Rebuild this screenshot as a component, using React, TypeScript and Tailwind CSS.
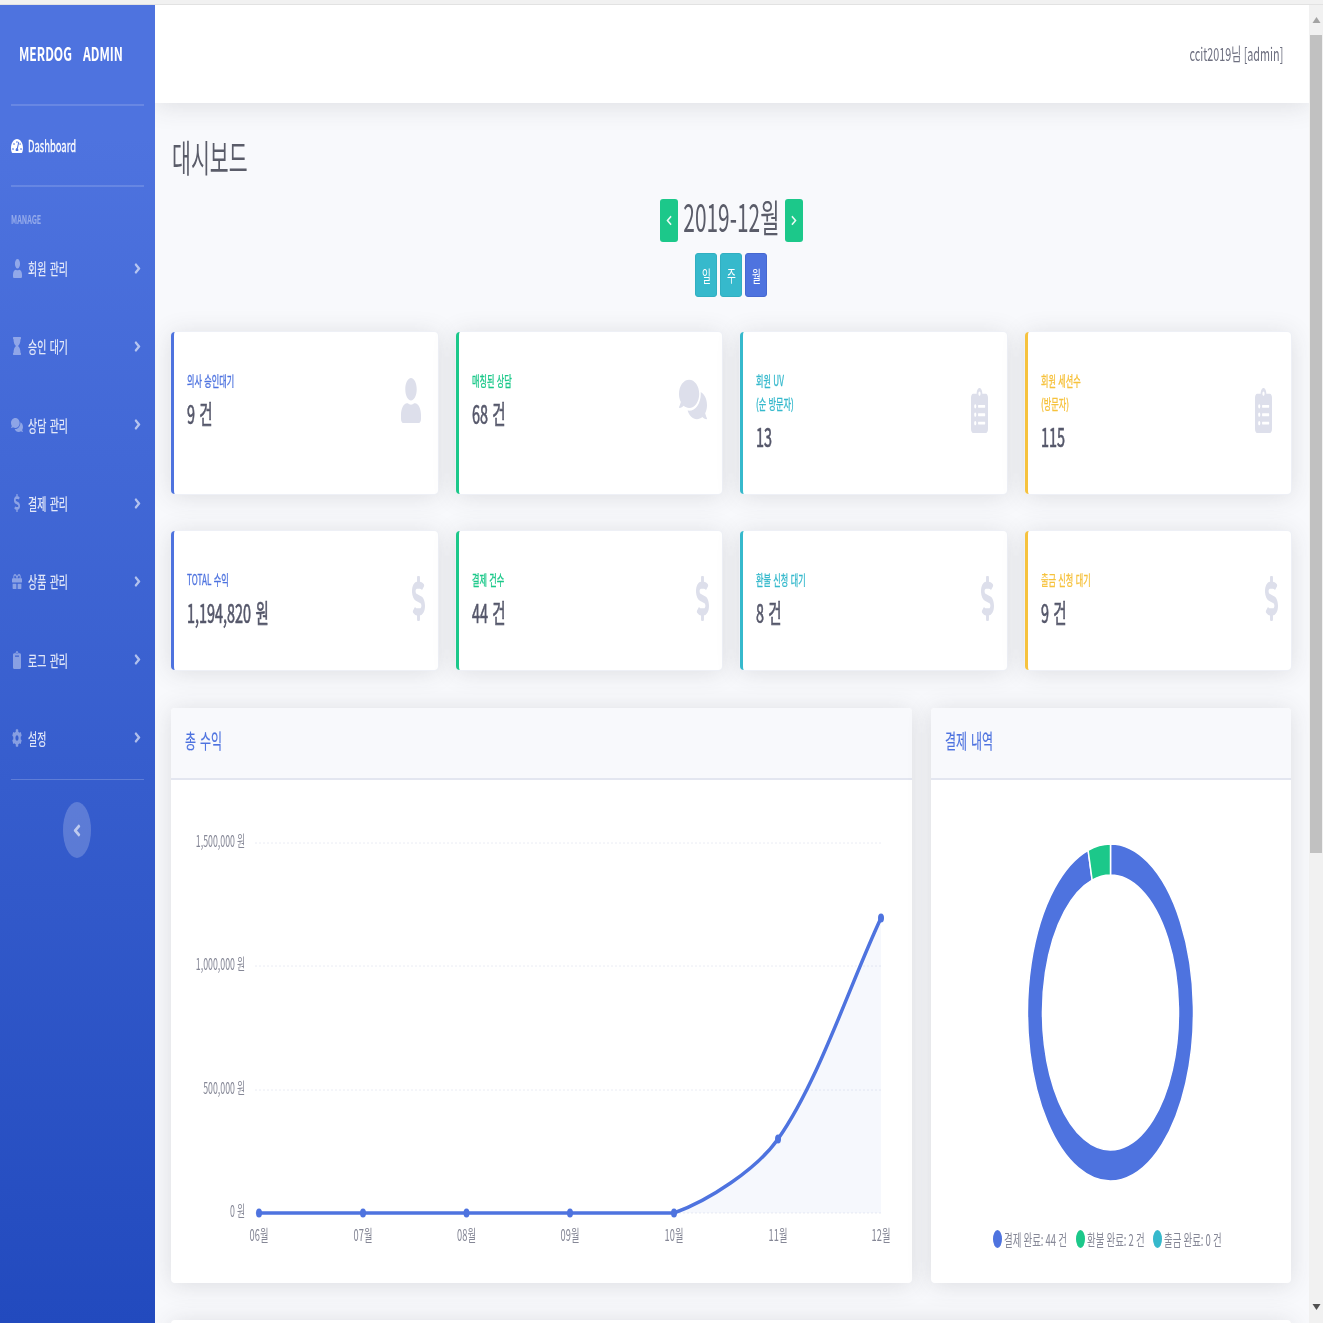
import { FaAngleRight, FaAngleLeft, FaChevronLeft, FaClipboardList, FaClipboard, FaCog, FaComments, FaDollarSign, FaGift, FaHourglass, FaTachometerAlt, FaUser } from "react-icons/fa";

const navItems = [
  { name: "회원 관리", icon: FaUser, size: "w-[9px] h-[19px]" },
  { name: "승인 대기", icon: FaHourglass, size: "w-[8px] h-[18px]" },
  { name: "상담 관리", icon: FaComments, size: "w-[12px] h-[16px]" },
  { name: "결제 관리", icon: FaDollarSign, size: "w-[6px] h-[18px]" },
  { name: "상품 관리", icon: FaGift, size: "w-[10px] h-[17px]" },
  { name: "로그 관리", icon: FaClipboard, size: "w-[8px] h-[18px]" },
  { name: "설정", icon: FaCog, size: "w-[10px] h-[18px]" },
];

const accents = {
  blue: { border: "border-l-[#4e73df]", text: "text-[#4e73df]" },
  green: { border: "border-l-[#1cc88a]", text: "text-[#1cc88a]" },
  teal: { border: "border-l-[#36b9cc]", text: "text-[#36b9cc]" },
  yellow: { border: "border-l-[#f6c23e]", text: "text-[#f6c23e]" },
};

const row1 = [
  { label: ["의사 승인대기"], value: "9 건", accent: accents.blue, icon: FaUser, size: "w-[20px] h-[45px] mr-[2px] mb-[2px]" },
  { label: ["매칭된 상담"], value: "68 건", accent: accents.green, icon: FaComments, size: "w-[28px] h-[45px] mb-[4px]" },
  { label: ["회원 UV", "(순 방문자)"], value: "13", accent: accents.teal, icon: FaClipboardList, size: "w-[17px] h-[45px] mr-[4px] mb-[6px]" },
  { label: ["회원 세션수", "(방문자)"], value: "115", accent: accents.yellow, icon: FaClipboardList, size: "w-[17px] h-[45px] mr-[4px] mb-[6px]" },
];

const row2 = [
  { label: ["TOTAL 수익"], value: "1,194,820 원", accent: accents.blue },
  { label: ["결제 건수"], value: "44 건", accent: accents.green },
  { label: ["환불 신청 대기"], value: "8 건", accent: accents.teal },
  { label: ["출금 신청 대기"], value: "9 건", accent: accents.yellow },
].map((c) => ({ ...c, icon: FaDollarSign, size: "w-[13px] h-[45px] mr-[-2px] mb-[4px]" }));

type Stat = (typeof row1)[number];

function StatCard({ item }: { item: Stat }) {
  const Icon = item.icon;
  return (
    <div className={`bg-white rounded-[4px] border-l-[3px] ${item.accent.border} shadow-[0_0_0_1px_#eef0f6,0_2px_25px_rgba(58,59,69,0.15)] pl-[13px] pr-[15px] py-[38px]`}>
      <div className="flex items-center justify-between">
        <div>
          <div className={`-mt-[1px] mb-[1px] text-[14px] leading-[23px] whitespace-nowrap [word-spacing:1px] [-webkit-text-stroke:0.35px] ${item.accent.text}`}>
            {item.label.map((l) => (
              <div key={l} className="origin-left scale-x-[0.58]">{l}</div>
            ))}
          </div>
          <div className="text-[26px] leading-[40px] text-[#55576a] whitespace-nowrap origin-left scale-x-[0.555] [word-spacing:2px] [-webkit-text-stroke:0.7px]">{item.value}</div>
        </div>
        <Icon className={`${item.size} text-[#dddfeb] shrink-0`} preserveAspectRatio="none" />
      </div>
    </div>
  );
}

function Sidebar() {
  return (
    <aside className="w-[155px] shrink-0 h-[1318px] bg-gradient-to-b from-[#4e73df] from-10% to-[#224abe] flex flex-col px-[11px]">
      <div className="h-[99px] shrink-0 flex items-center pl-[8px]">
        <span className="-mt-[2px] text-[19px] font-bold text-white whitespace-pre origin-left scale-x-[0.64]">MERDOG    ADMIN</span>
      </div>
      <div className="h-[2px] shrink-0 bg-white/15" />
      <div className="h-[79px] shrink-0 flex items-center">
        <FaTachometerAlt className="w-[12px] h-[16px] text-white shrink-0" preserveAspectRatio="none" />
        <span className="-mt-[2px] ml-[5px] text-[16px] text-white whitespace-nowrap origin-left scale-x-[0.59] [-webkit-text-stroke:0.3px]">Dashboard</span>
      </div>
      <div className="h-[2px] shrink-0 bg-white/15" />
      <div className="h-[42px] shrink-0 pt-[24px] text-[12px] leading-[16px] font-bold text-white/40 origin-left scale-x-[0.6]">MANAGE</div>
      {navItems.map((item) => {
        const Icon = item.icon;
        return (
          <div key={item.name} className="h-[78.3px] shrink-0 flex items-center">
            <div className="w-[12px] shrink-0 flex justify-center">
              <Icon className={`${item.size} text-white/40`} preserveAspectRatio="none" />
            </div>
            <span className="ml-[5px] w-[100px] text-[16px] text-white/85 whitespace-nowrap origin-left scale-x-[0.62] [word-spacing:2px] [-webkit-text-stroke:0.2px]">{item.name}</span>
            <FaAngleRight className="ml-auto mr-[3px] w-[7px] h-[17px] text-white/60 shrink-0" preserveAspectRatio="none" />
          </div>
        );
      })}
      <div className="mt-[2px] h-[1px] shrink-0 bg-white/20" />
      <div className="mt-[22px] ml-[52px] w-[28px] h-[56px] rounded-[50%] bg-white/20 flex items-center justify-center">
        <FaAngleLeft className="w-[8px] h-[19px] text-white/60" preserveAspectRatio="none" />
      </div>
    </aside>
  );
}

function CardHeader({ title }: { title: string }) {
  return (
    <div className="h-[72px] shrink-0 bg-[#f8f9fc] border-b-2 border-[#e3e6f0] flex items-center px-[14px]">
      <span className="-mt-[4px] text-[20px] text-[#4e73df] whitespace-nowrap origin-left scale-x-[0.6] [word-spacing:2px] [-webkit-text-stroke:0.2px]">{title}</span>
    </div>
  );
}

const yTicks = [
  { label: "1,500,000 원", y: 843 },
  { label: "1,000,000 원", y: 966 },
  { label: "500,000 원", y: 1090 },
  { label: "0 원", y: 1213 },
];

const xTicks = [
  { label: "06월", x: 259, y: 1213 },
  { label: "07월", x: 363, y: 1213 },
  { label: "08월", x: 466.5, y: 1213 },
  { label: "09월", x: 570, y: 1213 },
  { label: "10월", x: 674, y: 1213 },
  { label: "11월", x: 778, y: 1139 },
  { label: "12월", x: 881, y: 918 },
];

const curve = "C708.5 1200.7 756.7 1169.4 778 1139 C818.8 1081 850 984 881 918";

function LineChart() {
  return (
    <svg className="w-[741px] h-[503px]" viewBox="171 780 741 503">
      {yTicks.map((t) => (
        <g key={t.y}>
          <line x1="255" x2="881" y1={t.y} y2={t.y} stroke="#eaecf4" strokeWidth="1" strokeDasharray="2 2" />
          <text transform={`translate(245 ${t.y + 4}) scale(0.55 1)`} textAnchor="end" fontSize="16" fill="#858796">{t.label}</text>
        </g>
      ))}
      <path d={`M674 1213 ${curve} L881 1213 Z`} fill="#4e73df" fillOpacity="0.05" />
      <path d={`M259 1213 L674 1213 ${curve}`} fill="none" stroke="#4e73df" strokeWidth="3.5" />
      {xTicks.map((t) => (
        <g key={t.x}>
          <ellipse cx={t.x} cy={t.y} rx="3" ry="4.5" fill="#4e73df" />
          <text transform={`translate(${t.x} 1241) scale(0.58 1)`} textAnchor="middle" fontSize="16" fill="#858796">{t.label}</text>
        </g>
      ))}
    </svg>
  );
}

function Donut() {
  return (
    <svg className="w-[360px] h-[440px]" viewBox="931 780 360 440">
      <path d="M1110.5 844 A83 168.5 0 1 1 1088.1 850.25 L1092.15 880.1 A68 137.5 0 1 0 1110.5 875 Z" fill="#4e73df" stroke="#fff" strokeWidth="1.5" />
      <path d="M1088.1 850.25 A83 168.5 0 0 1 1110.5 844 L1110.5 875 A68 137.5 0 0 0 1092.15 880.1 Z" fill="#1cc88a" stroke="#fff" strokeWidth="1.5" />
    </svg>
  );
}

const legend = [
  { text: "결제 완료: 44 건", dot: "bg-[#4e73df]", box: "w-[83px]" },
  { text: "환불 완료: 2 건", dot: "bg-[#1cc88a]", box: "w-[77px]" },
  { text: "출금 완료: 0 건", dot: "bg-[#36b9cc]", box: "w-[70px]" },
];

function Scrollbar() {
  return (
    <div className="w-[14px] shrink-0 h-[1318px] bg-[#f1f1f1] flex flex-col items-center">
      <div className="h-[30px] shrink-0 flex items-center justify-center">
        <svg className="w-[9px] h-[8px]" viewBox="0 0 9 8"><path d="M4.5 1 L8.5 7 L0.5 7 Z" fill="#a3a3a3" /></svg>
      </div>
      <div className="w-[12px] h-[818px] shrink-0 bg-[#c1c1c1]" />
      <div className="mt-auto h-[32px] shrink-0 flex items-center justify-center">
        <svg className="w-[9px] h-[8px]" viewBox="0 0 9 8"><path d="M0.5 1 L8.5 1 L4.5 7 Z" fill="#505050" /></svg>
      </div>
    </div>
  );
}

export default function App() {
  return (
    <div className="h-[1323px] w-[1323px] overflow-hidden bg-[#f8f9fc] blur-[0.5px] font-['Noto_Sans_CJK_KR','Noto_Sans',sans-serif]">
      <div className="h-[5px] bg-[#f1f1f1] border-b border-[#e2e2e2]" />
      <div className="flex">
        <Sidebar />
        <main className="flex-1 min-w-0 h-[1318px] overflow-hidden">
          <header className="relative h-[98px] bg-white shadow-[0_2px_25px_rgba(58,59,69,0.15)] flex items-center justify-end pr-[26px]">
            <span className="-mt-[2px] text-[18px] text-[#6e7080] whitespace-nowrap origin-right scale-x-[0.6]">ccit2019님 [admin]</span>
          </header>

          <div className="pl-[16px] pr-[18px]">
            <h1 className="mt-[30px] h-[50px] text-[38px] leading-[46px] text-[#5a5c69] whitespace-nowrap origin-left scale-x-[0.54] translate-x-[1px]">대시보드</h1>

            <div className="mt-[16px] h-[43px] flex items-center justify-center">
              <button className="w-[18px] h-[43px] rounded-[3px] bg-[#1cc88a] flex items-center justify-center">
                <FaChevronLeft className="w-[6px] h-[11px] text-white/90" preserveAspectRatio="none" />
              </button>
              <div className="w-[107px] mb-[10px] flex justify-center">
                <span className="shrink-0 text-[38px] leading-[43px] text-[#5a5c69] whitespace-nowrap scale-x-[0.55]">2019-12월</span>
              </div>
              <button className="w-[18px] h-[43px] rounded-[3px] bg-[#1cc88a] flex items-center justify-center">
                <FaChevronLeft className="w-[6px] h-[11px] text-white/90 rotate-180" preserveAspectRatio="none" />
              </button>
            </div>

            <div className="mt-[11px] h-[44px] flex justify-center gap-[3px]">
              {["일", "주", "월"].map((d) => (
                <button key={d} className={`w-[22px] h-[44px] rounded-[3px] text-white text-[16px] flex items-center justify-center border ${d === "월" ? "bg-[#4e73df] border-[#4668d0]" : "bg-[#36b9cc] border-[#31afc1]"}`}>
                  <span className="shrink-0 scale-x-[0.6]">{d}</span>
                </button>
              ))}
            </div>

            <div className="mt-[35px] grid grid-cols-4 gap-x-[18px] gap-y-[37px]">
              {row1.map((c) => <StatCard key={c.label[0]} item={c} />)}
              {row2.map((c) => <StatCard key={c.label[0]} item={c} />)}
            </div>

            <div className="mt-[38px] grid grid-cols-[741px_360px] gap-x-[19px]">
              <div className="h-[575px] bg-white rounded-[4px] overflow-hidden shadow-[0_2px_25px_rgba(58,59,69,0.15)] flex flex-col">
                <CardHeader title="총 수익" />
                <LineChart />
              </div>
              <div className="h-[575px] bg-white rounded-[4px] overflow-hidden shadow-[0_2px_25px_rgba(58,59,69,0.15)] flex flex-col">
                <CardHeader title="결제 내역" />
                <Donut />
                <div className="h-[40px] -mt-[1px] flex items-center pl-[62px]">
                  {legend.map((l) => (
                    <div key={l.text} className={`${l.box} shrink-0 flex items-center`}>
                      <span className={`w-[9px] h-[18px] rounded-[50%] shrink-0 ${l.dot}`} />
                      <span className="ml-[2px] text-[16px] text-[#858796] whitespace-nowrap origin-left scale-x-[0.59]">{l.text}</span>
                    </div>
                  ))}
                </div>
              </div>
            </div>

            <div className="mt-[37px] h-[100px] bg-white rounded-[4px] shadow-[0_2px_25px_rgba(58,59,69,0.15)]" />
          </div>
        </main>
        <Scrollbar />
      </div>
    </div>
  );
}
